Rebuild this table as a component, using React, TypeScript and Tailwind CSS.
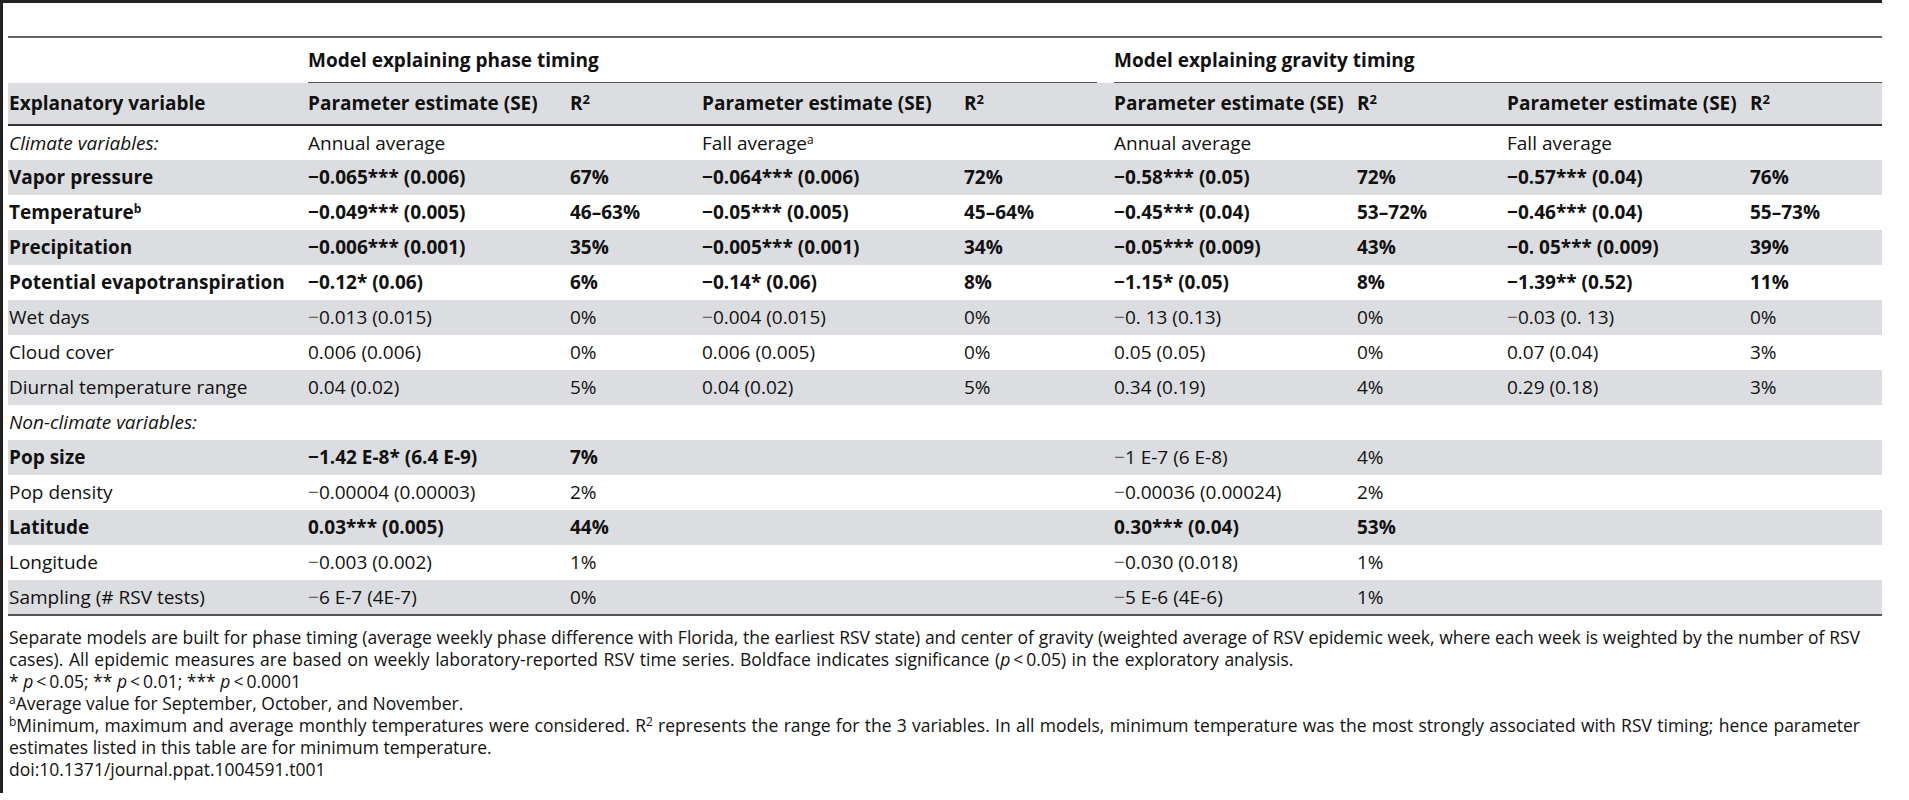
import React from "react";

type Cell = { t: React.ReactNode; b?: boolean; i?: boolean };

const M = ({ light }: { light?: boolean }) => (
  <span className={light ? "text-[#666]" : ""}>−</span>
);

const R2 = () => (
  <span>
    R<sup className="text-[13px]">2</sup>
  </span>
);

const sup = (s: string) => <sup className="text-[12px]">{s}</sup>;

const widths = [300, 262, 132, 262, 150, 243, 150, 243, 132];

type Row = { cells: Cell[]; gray: boolean };

const b = (t: React.ReactNode): Cell => ({ t, b: true });
const n = (t: React.ReactNode): Cell => ({ t });
const e: Cell = { t: "" };

const rows: Row[] = [
  {
    gray: false,
    cells: [
      { t: "Climate variables:", i: true },
      n("Annual average"),
      e,
      n(<>Fall average{sup("a")}</>),
      e,
      n("Annual average"),
      e,
      n("Fall average"),
      e,
    ],
  },
  {
    gray: true,
    cells: [
      b("Vapor pressure"),
      b(<><M />0.065*** (0.006)</>),
      b("67%"),
      b(<><M />0.064*** (0.006)</>),
      b("72%"),
      b(<><M />0.58*** (0.05)</>),
      b("72%"),
      b(<><M />0.57*** (0.04)</>),
      b("76%"),
    ],
  },
  {
    gray: false,
    cells: [
      b(<>Temperature{sup("b")}</>),
      b(<><M />0.049*** (0.005)</>),
      b("46–63%"),
      b(<><M />0.05*** (0.005)</>),
      b("45–64%"),
      b(<><M />0.45*** (0.04)</>),
      b("53–72%"),
      b(<><M />0.46*** (0.04)</>),
      b("55–73%"),
    ],
  },
  {
    gray: true,
    cells: [
      b("Precipitation"),
      b(<><M />0.006*** (0.001)</>),
      b("35%"),
      b(<><M />0.005*** (0.001)</>),
      b("34%"),
      b(<><M />0.05*** (0.009)</>),
      b("43%"),
      b(<><M />0. 05*** (0.009)</>),
      b("39%"),
    ],
  },
  {
    gray: false,
    cells: [
      b("Potential evapotranspiration"),
      b(<><M />0.12* (0.06)</>),
      b("6%"),
      b(<><M />0.14* (0.06)</>),
      b("8%"),
      b(<><M />1.15* (0.05)</>),
      b("8%"),
      b(<><M />1.39** (0.52)</>),
      b("11%"),
    ],
  },
  {
    gray: true,
    cells: [
      n("Wet days"),
      n(<><M light />0.013 (0.015)</>),
      n("0%"),
      n(<><M light />0.004 (0.015)</>),
      n("0%"),
      n(<><M light />0. 13 (0.13)</>),
      n("0%"),
      n(<><M light />0.03 (0. 13)</>),
      n("0%"),
    ],
  },
  {
    gray: false,
    cells: [
      n("Cloud cover"),
      n("0.006 (0.006)"),
      n("0%"),
      n("0.006 (0.005)"),
      n("0%"),
      n("0.05 (0.05)"),
      n("0%"),
      n("0.07 (0.04)"),
      n("3%"),
    ],
  },
  {
    gray: true,
    cells: [
      n("Diurnal temperature range"),
      n("0.04 (0.02)"),
      n("5%"),
      n("0.04 (0.02)"),
      n("5%"),
      n("0.34 (0.19)"),
      n("4%"),
      n("0.29 (0.18)"),
      n("3%"),
    ],
  },
  {
    gray: false,
    cells: [{ t: "Non-climate variables:", i: true }, e, e, e, e, e, e, e, e],
  },
  {
    gray: true,
    cells: [
      b("Pop size"),
      b(<><M />1.42 E-8* (6.4 E-9)</>),
      b("7%"),
      e,
      e,
      n(<><M light />1 E-7 (6 E-8)</>),
      n("4%"),
      e,
      e,
    ],
  },
  {
    gray: false,
    cells: [
      n("Pop density"),
      n(<><M light />0.00004 (0.00003)</>),
      n("2%"),
      e,
      e,
      n(<><M light />0.00036 (0.00024)</>),
      n("2%"),
      e,
      e,
    ],
  },
  {
    gray: true,
    cells: [
      b("Latitude"),
      b("0.03*** (0.005)"),
      b("44%"),
      e,
      e,
      b("0.30*** (0.04)"),
      b("53%"),
      e,
      e,
    ],
  },
  {
    gray: false,
    cells: [
      n("Longitude"),
      n(<><M light />0.003 (0.002)</>),
      n("1%"),
      e,
      e,
      n(<><M light />0.030 (0.018)</>),
      n("1%"),
      e,
      e,
    ],
  },
  {
    gray: true,
    cells: [
      n("Sampling (# RSV tests)"),
      n(<><M light />6 E-7 (4E-7)</>),
      n("0%"),
      e,
      e,
      n(<><M light />5 E-6 (4E-6)</>),
      n("1%"),
      e,
      e,
    ],
  },
];

const P = () => <i>p</i>;
const LT = () => <span className="mx-[3px]">&lt;</span>;

export default function App() {
  return (
    <div
      className="w-[1882px] h-[793px] border-t-[3px] border-l-[3px] border-[#222] bg-white text-[#111]"
      style={{ fontFamily: '"Open Sans", "Noto Sans", sans-serif' }}
    >
      <div className="pl-[5px] pt-[33px]">
        <table className="table-fixed border-collapse text-[19px] leading-none">
          <colgroup>
            {widths.map((w, k) => (
              <col key={k} style={{ width: w }} />
            ))}
          </colgroup>
          <thead>
            <tr className="border-t-2 border-[#666] h-[46px]">
              <th></th>
              <th colSpan={4} className="p-0 text-left align-bottom font-bold">
                <div className="mr-[17px] border-b-[1.5px] border-[#555] pb-[12px]">
                  Model explaining phase timing
                </div>
              </th>
              <th colSpan={4} className="p-0 text-left align-bottom font-bold">
                <div className="border-b-[1.5px] border-[#555] pb-[12px]">
                  Model explaining gravity timing
                </div>
              </th>
            </tr>
            <tr className="bg-[#dcdde0] h-[42px] border-b-2 border-[#333] font-bold text-left">
              <th className="p-0 pl-[1px]">Explanatory variable</th>
              <th className="p-0">Parameter estimate (SE)</th>
              <th className="p-0"><R2 /></th>
              <th className="p-0">Parameter estimate (SE)</th>
              <th className="p-0"><R2 /></th>
              <th className="p-0">Parameter estimate (SE)</th>
              <th className="p-0"><R2 /></th>
              <th className="p-0">Parameter estimate (SE)</th>
              <th className="p-0"><R2 /></th>
            </tr>
          </thead>
          <tbody>
            {rows.map((r, ri) => (
              <tr
                key={ri}
                className={
                  "h-[35px] " +
                  (r.gray ? "bg-[#dcdde0] " : "bg-white ") +
                  (ri === rows.length - 1 ? "border-b-2 border-[#555]" : "")
                }
              >
                {r.cells.map((c, ci) => (
                  <td
                    key={ci}
                    className={
                      "p-0 whitespace-nowrap " +
                      (ci === 0 ? "pl-[1px] " : "") +
                      (c.b ? "font-bold " : "") +
                      (c.i ? "italic " : "")
                    }
                  >
                    {c.t}
                  </td>
                ))}
              </tr>
            ))}
          </tbody>
        </table>
        <div className="w-[1852px] pl-[1px] pt-[10px] text-[17.5px] leading-[22px]">
          <div className="text-justify [text-align-last:justify] whitespace-nowrap">
            Separate models are built for phase timing (average weekly phase difference with Florida, the earliest RSV state) and center of gravity (weighted average of RSV epidemic week, where each week is weighted by the number of RSV
          </div>
          <div className="[word-spacing:1px]">
            cases). All epidemic measures are based on weekly laboratory-reported RSV time series. Boldface indicates significance (<P /><LT />0.05) in the exploratory analysis.
          </div>
          <div>
            * <P /><LT />0.05; ** <P /><LT />0.01; *** <P /><LT />0.0001
          </div>
          <div>
            {sup("a")}Average value for September, October, and November.
          </div>
          <div className="text-justify [text-align-last:justify] whitespace-nowrap">
            {sup("b")}Minimum, maximum and average monthly temperatures were considered. R{sup("2")} represents the range for the 3 variables. In all models, minimum temperature was the most strongly associated with RSV timing; hence parameter
          </div>
          <div>estimates listed in this table are for minimum temperature.</div>
          <div>doi:10.1371/journal.ppat.1004591.t001</div>
        </div>
      </div>
    </div>
  );
}
